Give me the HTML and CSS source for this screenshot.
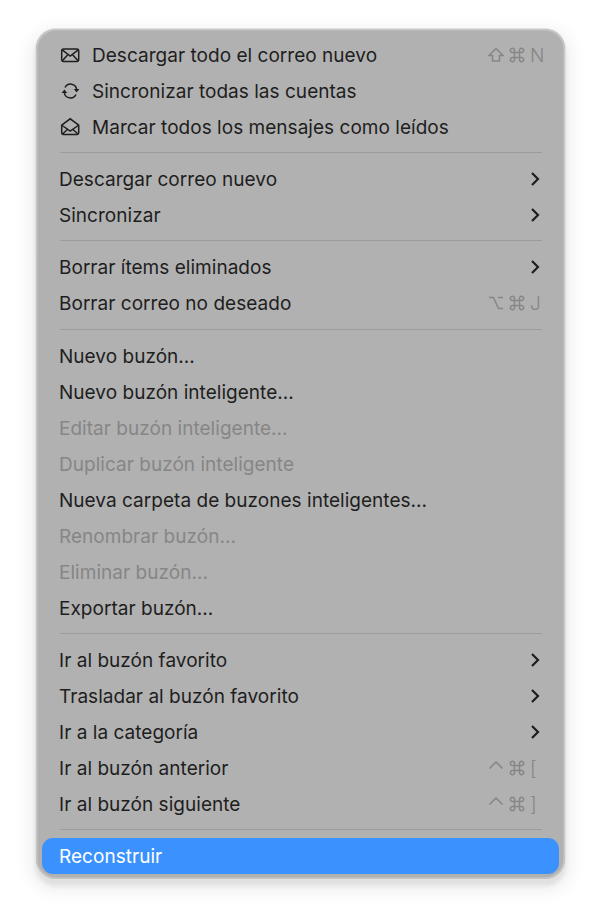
FILE: index.html
```html
<!DOCTYPE html>
<html lang="es">
<head>
    <meta charset="UTF-8">
    <meta name="viewport" content="width=device-width, initial-scale=1.0">
    <title>Menú de buzón</title>
    <link rel="stylesheet" href="styles.css">
</head>
<body>
    <svg class="sprite">
        <symbol id="chevron" viewBox="0 0 10 14"><path d="M2 1 8 7l-6 6"/></symbol>
        <symbol id="shift" viewBox="0 0 16 16"><path d="M8 1.500 15 8.500h-3.500V14h-7V8.500H1z"/></symbol>
        <symbol id="cmd" viewBox="0 0 16 16"><path d="M5.500 5.500H3.700a2.100 2.100 0 1 1 1.800-1.800zM10.500 5.500V3.700a2.100 2.100 0 1 1 1.800 1.800zM10.500 10.500h1.800a2.100 2.100 0 1 1-1.800 1.800zM5.500 10.500v1.800a2.100 2.100 0 1 1-1.800-1.800zM5.500 5.500h5v5h-5z"/></symbol>
        <symbol id="option" viewBox="0 0 16 16"><path d="M1 2.500h4.500l5 11H15M10 2.500h5"/></symbol>
        <symbol id="ctrl" viewBox="0 0 16 16"><path d="M1.500 8.500 8 2l6.500 6.500"/></symbol>
    </svg>
    <div class="menu">
        <div class="group">
            <div class="item">
                <svg class="icon" viewBox="0 0 20 20"><rect x="1.700" y="4" width="17" height="12.400" rx="1.800"/><path d="M2.200 4.800 10.200 11l8-6.200M2.400 15.800l5.600-6.400M18 15.800l-5.600-6.400"/></svg>
                <span class="label">Descargar todo el correo nuevo</span>
                <span class="keys"><svg class="key"><use href="#shift"/></svg><svg class="key"><use href="#cmd"/></svg><span class="key-char">N</span></span>
            </div>
            <div class="item">
                <svg class="icon" viewBox="0 0 20 20"><path d="M5 6.500A6.200 6.200 0 0 1 16.700 8.500M16 13.500A6.200 6.200 0 0 1 4.300 11.500"/><path class="solid" d="M13.800 8h5.600l-2.800 3.500zM1.600 12h5.600L4.400 8.500z"/></svg>
                <span class="label">Sincronizar todas las cuentas</span>
            </div>
            <div class="item">
                <svg class="icon" viewBox="0 0 20 20"><path d="M1.700 8.200 10.200 1.800l8.500 6.400v7.400a1.800 1.800 0 0 1-1.800 1.800H3.500a1.800 1.800 0 0 1-1.800-1.800z"/><path d="M2.200 8.500 10.200 14l8-5.500M2.400 17l5.400-4.800M18 17l-5.400-4.800"/></svg>
                <span class="label">Marcar todos los mensajes como leídos</span>
            </div>
        </div>
        <div class="group">
            <div class="item"><span class="label">Descargar correo nuevo</span><svg class="chevron"><use href="#chevron"/></svg></div>
            <div class="item"><span class="label">Sincronizar</span><svg class="chevron"><use href="#chevron"/></svg></div>
        </div>
        <div class="group">
            <div class="item"><span class="label">Borrar ítems eliminados</span><svg class="chevron"><use href="#chevron"/></svg></div>
            <div class="item">
                <span class="label">Borrar correo no deseado</span>
                <span class="keys"><svg class="key"><use href="#option"/></svg><svg class="key"><use href="#cmd"/></svg><span class="key-char">J</span></span>
            </div>
        </div>
        <div class="group group-wide">
            <div class="item"><span class="label">Nuevo buzón...</span></div>
            <div class="item"><span class="label">Nuevo buzón inteligente...</span></div>
            <div class="item disabled"><span class="label">Editar buzón inteligente...</span></div>
            <div class="item disabled"><span class="label">Duplicar buzón inteligente</span></div>
            <div class="item"><span class="label">Nueva carpeta de buzones inteligentes...</span></div>
            <div class="item disabled"><span class="label">Renombrar buzón...</span></div>
            <div class="item disabled"><span class="label">Eliminar buzón...</span></div>
            <div class="item"><span class="label">Exportar buzón...</span></div>
        </div>
        <div class="group">
            <div class="item"><span class="label">Ir al buzón favorito</span><svg class="chevron"><use href="#chevron"/></svg></div>
            <div class="item"><span class="label">Trasladar al buzón favorito</span><svg class="chevron"><use href="#chevron"/></svg></div>
            <div class="item"><span class="label">Ir a la categoría</span><svg class="chevron"><use href="#chevron"/></svg></div>
            <div class="item">
                <span class="label">Ir al buzón anterior</span>
                <span class="keys"><svg class="key"><use href="#ctrl"/></svg><svg class="key"><use href="#cmd"/></svg><span class="key-char">[</span></span>
            </div>
            <div class="item">
                <span class="label">Ir al buzón siguiente</span>
                <span class="keys"><svg class="key"><use href="#ctrl"/></svg><svg class="key"><use href="#cmd"/></svg><span class="key-char">]</span></span>
            </div>
        </div>
        <div class="group">
            <div class="item active"><span class="label">Reconstruir</span></div>
        </div>
    </div>
</body>
</html>
```

FILE: styles.css
```css
body {
    margin: 0;
    height: 922px;
    background-color: #fff;
    font-family: Inter, "Liberation Sans", sans-serif;
    overflow: hidden;
}

.sprite {
    display: none;
}

.menu {
    width: 529px;
    height: 850px;
    margin: 29px 0 0 36px;
    padding: 8px 6px 5px;
    box-sizing: border-box;
    background-color: #b1b1b1;
    border-radius: 20px;
    box-shadow: inset 0 0 0 1.500px #c6c6c6, 0 0 0 1px #e2e2e2, 0 6px 4px 1px #e0e0e0, 0 6px 16px 8px #f2f2f2;
}

.group + .group {
    margin-top: 7px;
    padding-top: 9px;
    background: linear-gradient(#9c9c9c, #9c9c9c) no-repeat center top / 482px 1px;
}

.group + .group-wide {
    margin-top: 8px;
}

.item {
    display: flex;
    align-items: center;
    height: 36px;
    padding: 0 17px;
    border-radius: 11px;
    color: #1e1e1e;
    font-size: 19px;
    letter-spacing: 0.030px;
}

.label {
    flex: 1;
    white-space: nowrap;
}

.disabled {
    color: #868686;
}

.active {
    background-color: #3b92ff;
    color: #fff;
}

.icon {
    width: 20px;
    height: 20px;
    margin: 0 12px 0 1px;
    fill: none;
    stroke: #1e1e1e;
    stroke-width: 1.500;
    flex-shrink: 0;
}

.icon .solid {
    fill: #1e1e1e;
    stroke: none;
}

.chevron {
    width: 10px;
    height: 14px;
    margin-right: 2px;
    fill: none;
    stroke: #1e1e1e;
    stroke-width: 2.200;
}

.keys {
    display: flex;
    align-items: center;
    gap: 5px;
    color: #868686;
    font-weight: 300;
    margin-right: -2px;
}

.key {
    width: 16px;
    height: 16px;
    fill: none;
    stroke: #868686;
    stroke-width: 1.500;
}

.key-char {
    width: 14px;
}
```
